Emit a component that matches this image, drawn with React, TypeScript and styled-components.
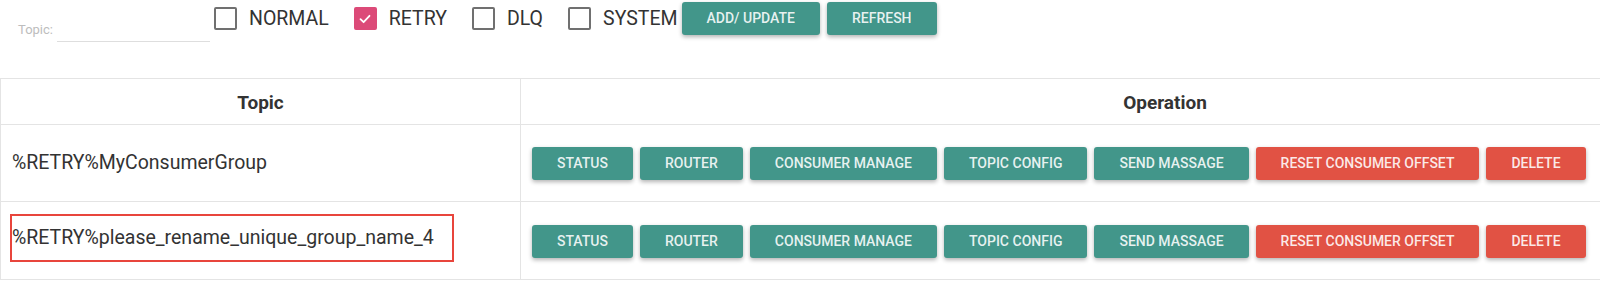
import React from "react";
import styled, { createGlobalStyle } from "styled-components";

const GlobalStyle = createGlobalStyle`
  html, body {
    margin: 0;
    padding: 0;
    background: #ffffff;
    overflow: hidden;
  }
  body {
    font-family: Roboto, "Noto Sans", Arial, sans-serif;
    color: rgba(0, 0, 0, 0.87);
  }
`;

const Page = styled.div`
  width: 1600px;
  overflow: hidden;
`;

const Toolbar = styled.div`
  display: flex;
  align-items: flex-start;
  height: 40px;
  padding: 2px 0 0 18px;
  margin-bottom: 36px;
`;

const TopicField = styled.label`
  display: flex;
  align-items: flex-end;
  height: 23px;
  margin-top: 17px;
  margin-right: 4px;
`;

const FieldLabel = styled.span`
  font-size: 13px;
  line-height: 16px;
  color: #bdbdbd;
  padding-bottom: 4px;
  margin-right: 4px;
`;

const FieldInput = styled.input`
  width: 153px;
  height: 23px;
  box-sizing: border-box;
  border: 0;
  border-bottom: 1px solid #dedede;
  background: transparent;
  outline: none;
  padding: 0;
  font: inherit;
`;

const CheckItem = styled.div<{ $last?: boolean }>`
  display: flex;
  align-items: center;
  gap: 12px;
  height: 33px;
  margin-right: ${(p) => (p.$last ? "4px" : "25px")};
`;

const Box = styled.span<{ $checked?: boolean }>`
  display: flex;
  align-items: center;
  justify-content: center;
  width: 23px;
  height: 23px;
  box-sizing: border-box;
  border-radius: 2px;
  border: 2px solid ${(p) => (p.$checked ? "#dc4a78" : "#707070")};
  background: ${(p) => (p.$checked ? "#dc4a78" : "transparent")};
`;

const CheckLabel = styled.span`
  font-size: 19.5px;
  line-height: 22px;
  color: #333333;
`;

const ButtonGroup = styled.div`
  display: flex;
  gap: 7px;
`;

const Button = styled.button<{ $danger?: boolean }>`
  height: 33px;
  padding: 0 25px;
  border: 0;
  border-radius: 3px;
  background: ${(p) => (p.$danger ? "#e15244" : "#42968a")};
  color: rgba(255, 255, 255, 0.88);
  font-family: Roboto, "Noto Sans", Arial, sans-serif;
  font-size: 14px;
  font-weight: 500;
  line-height: 33px;
  white-space: nowrap;
  box-shadow: 0 2px 4px rgba(0, 0, 0, 0.3);
  cursor: pointer;
`;

const Table = styled.table`
  width: 1810px;
  border-collapse: collapse;
  table-layout: fixed;
`;

const HeadCell = styled.th<{ $w?: number }>`
  width: ${(p) => (p.$w ? `${p.$w}px` : "auto")};
  height: 44px;
  padding: 1px 0 0;
  border: 1px solid #e4e4e4;
  font-size: 19px;
  font-weight: 700;
  color: #333333;
  text-align: center;
  vertical-align: middle;
`;

const Cell = styled.td<{ $h: number }>`
  height: ${(p) => p.$h}px;
  padding: 0 0 0 9px;
  border: 1px solid #e4e4e4;
  vertical-align: middle;
`;

const OpCell = styled(Cell)`
  padding-left: 11px;
  padding-top: 1px;
`;

const TopicName = styled.span<{ $marked?: boolean }>`
  display: inline-flex;
  align-items: center;
  box-sizing: border-box;
  width: 444px;
  height: 48px;
  margin-bottom: ${(p) => (p.$marked ? "6px" : "2px")};
  border: 2px solid ${(p) => (p.$marked ? "#e8453c" : "transparent")};
  font-size: 19.5px;
  color: #333333;
  white-space: nowrap;
`;

const Check = () => (
  <svg width="14" height="14" viewBox="0 0 14 14" fill="none">
    <path d="M2.5 7.2 L5.6 10.2 L11.5 3.8" stroke="#ffffff" strokeWidth="1.8" strokeLinecap="round" strokeLinejoin="round" />
  </svg>
);

const filters = [
  { name: "NORMAL", checked: false },
  { name: "RETRY", checked: true },
  { name: "DLQ", checked: false },
  { name: "SYSTEM", checked: false },
];

const ops = [
  { name: "STATUS" },
  { name: "ROUTER" },
  { name: "CONSUMER MANAGE" },
  { name: "TOPIC CONFIG" },
  { name: "SEND MASSAGE" },
  { name: "RESET CONSUMER OFFSET", danger: true },
  { name: "DELETE", danger: true },
];

const rows = [
  { topic: "%RETRY%MyConsumerGroup", marked: false, h: 75 },
  { topic: "%RETRY%please_rename_unique_group_name_4", marked: true, h: 76 },
];

export default function App() {
  return (
    <Page>
      <GlobalStyle />
      <Toolbar>
        <TopicField>
          <FieldLabel>Topic:</FieldLabel>
          <FieldInput type="text" />
        </TopicField>
        {filters.map((f, i) => (
          <CheckItem key={f.name} $last={i === filters.length - 1}>
            <Box $checked={f.checked}>{f.checked && <Check />}</Box>
            <CheckLabel>{f.name}</CheckLabel>
          </CheckItem>
        ))}
        <ButtonGroup>
          <Button>ADD/ UPDATE</Button>
          <Button>REFRESH</Button>
        </ButtonGroup>
      </Toolbar>
      <Table>
        <thead>
          <tr>
            <HeadCell $w={519}>Topic</HeadCell>
            <HeadCell>Operation</HeadCell>
          </tr>
        </thead>
        <tbody>
          {rows.map((r) => (
            <tr key={r.topic}>
              <Cell $h={r.h}>
                <TopicName $marked={r.marked}>{r.topic}</TopicName>
              </Cell>
              <OpCell $h={r.h}>
                <ButtonGroup>
                  {ops.map((o) => (
                    <Button key={o.name} $danger={o.danger}>
                      {o.name}
                    </Button>
                  ))}
                </ButtonGroup>
              </OpCell>
            </tr>
          ))}
        </tbody>
      </Table>
    </Page>
  );
}
